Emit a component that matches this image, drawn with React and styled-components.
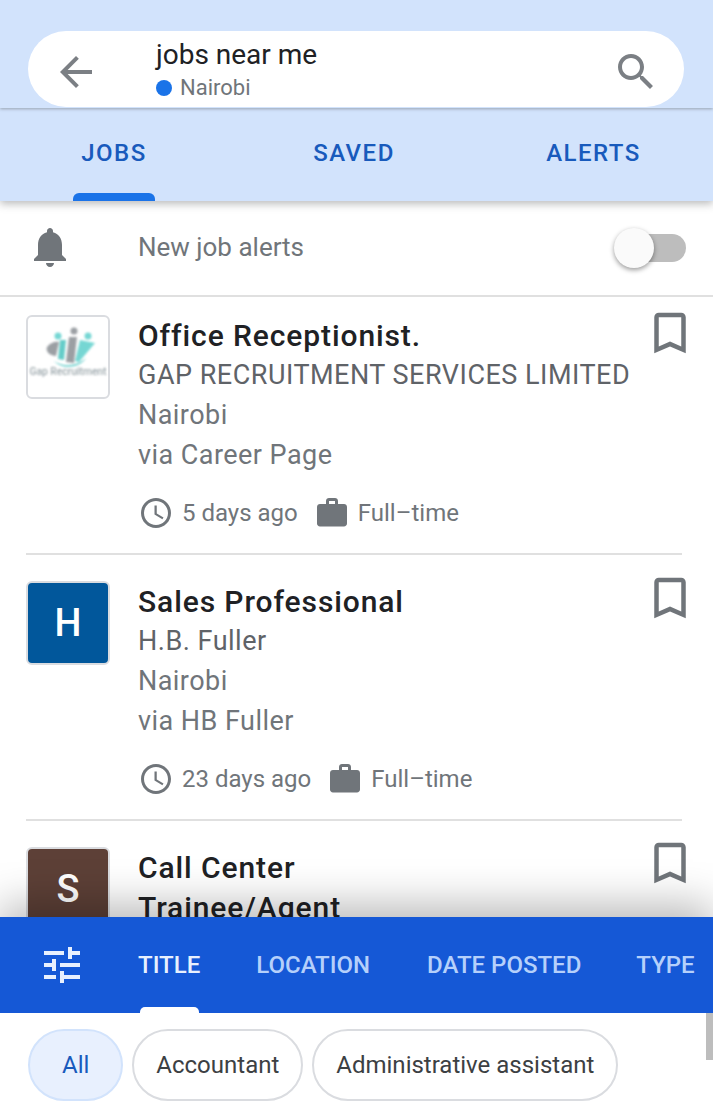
import styled, { createGlobalStyle } from 'styled-components'

const GlobalStyle = createGlobalStyle`
  html, body, #root {
    margin: 0;
    height: 100%;
  }
  body {
    font-family: Roboto, "Liberation Sans", sans-serif;
    background: #fff;
    overflow: hidden;
  }
`

const Page = styled.div`
  position: relative;
  height: 100vh;
  display: flex;
  flex-direction: column;
  overflow: hidden;
`

const Header = styled.header`
  flex: none;
  height: 201px;
  background: #d2e3fc;
  box-shadow: 0 3px 8px rgba(60, 64, 67, 0.35);
  position: relative;
  z-index: 2;
`

const SearchZone = styled.div`
  height: 108px;
  padding: 31px 29px 0 28px;
  box-sizing: border-box;
  box-shadow: 0 1px 3px rgba(60, 64, 67, 0.4);
`

const SearchPill = styled.div`
  height: 76px;
  background: #fff;
  border-radius: 38px;
  display: flex;
  align-items: center;
  padding: 0 24px 0 24px;
`

const Icon = styled.svg`
  flex: none;
  display: block;
  width: ${p => p.$size}px;
  height: ${p => p.$size}px;
  fill: ${p => p.$color || '#70757a'};
`

const PillIcon = styled.span`
  flex: none;
  margin-top: 5px;
  opacity: 0.92;
`

const QueryBlock = styled.div`
  flex: 1;
  margin-left: 56px;
  margin-top: 1px;
`

const Query = styled.div`
  font-size: 28px;
  line-height: 44px;
  margin-top: -6px;
  color: #202124;
`

const LocationLine = styled.div`
  display: flex;
  align-items: center;
  gap: 8px;
  font-size: 22px;
  line-height: 26px;
  margin-top: -2px;
  color: #70757a;
`

const Dot = styled.span`
  width: 16px;
  height: 16px;
  border-radius: 50%;
  background: #1a73e8;
`

const Tabs = styled.nav`
  height: 93px;
  display: grid;
  grid-template-columns: 228px 252px 227px;
`

const Tab = styled.div`
  position: relative;
  padding-top: 31px;
  text-align: center;
  font-size: 24px;
  line-height: 29px;
  font-weight: 500;
  letter-spacing: 1.5px;
  color: #185abc;
`

const TabMarker = styled.span`
  position: absolute;
  left: 73px;
  bottom: 0;
  width: 82px;
  height: 8px;
  border-radius: 6px 6px 0 0;
  background: #1a73e8;
`

const AlertRow = styled.div`
  flex: none;
  height: 94px;
  display: flex;
  align-items: center;
  padding: 0 27px 0 26px;
  border-bottom: 2px solid #e0e0e0;
`

const BellSlot = styled.span`
  flex: none;
  margin-top: -3px;
`

const AlertLabel = styled.div`
  flex: 1;
  margin-left: 64px;
  margin-top: -2px;
  font-size: 26px;
  color: #70757a;
`

const Toggle = styled.div`
  position: relative;
  width: 53px;
  height: 28px;
  border-radius: 14px;
  background: #bdbdbd;
`

const ToggleKnob = styled.span`
  position: absolute;
  left: -19px;
  top: -6px;
  width: 40px;
  height: 40px;
  border-radius: 50%;
  background: #fafafa;
  box-shadow: 0 2px 5px rgba(0, 0, 0, 0.4);
`

const JobList = styled.main`
  flex: 1;
  min-height: 0;
  overflow: hidden;
`

const JobCard = styled.article`
  display: flex;
  margin: 0 31px 0 26px;
  height: ${p => p.$height}px;
  padding-top: ${p => p.$top}px;
  box-sizing: border-box;
  border-bottom: 2px solid #e0e0e0;
`

const LogoBox = styled.div`
  flex: none;
  width: 84px;
  height: 84px;
  box-sizing: border-box;
  border-radius: 6px;
  border: 2px solid #dadce0;
  background: ${p => p.$bg || '#fff'};
  color: #fff;
  font-size: 38px;
  font-weight: 500;
  display: flex;
  align-items: center;
  justify-content: center;
`

const JobBody = styled.div`
  flex: 1;
  min-width: 0;
  margin-left: 28px;
`

const JobTitle = styled.h2`
  margin: 1px 0 -1px;
  width: 300px;
  font-size: 30px;
  line-height: 40px;
  font-weight: 500;
  letter-spacing: 0.9px;
  color: #202124;
  white-space: pre-line;
`

const Company = styled.div`
  font-size: 27px;
  line-height: 40px;
  letter-spacing: 0.5px;
  color: #5f6368;
  white-space: nowrap;
`

const MetaLine = styled.div`
  font-size: 27px;
  line-height: 40px;
  letter-spacing: 0.45px;
  color: #70757a;
`

const Facts = styled.div`
  display: flex;
  align-items: center;
  margin-top: 20px;
  font-size: 24px;
  color: #70757a;
`

const Fact = styled.span`
  display: flex;
  align-items: center;
  gap: 8px;
  margin-right: 16px;
`

const SaveSlot = styled.div`
  flex: none;
  width: 0;
  position: relative;
`

const SaveIcon = styled(Icon)`
  position: absolute;
  right: -15px;
  top: ${p => p.$top}px;
`

const BottomPanel = styled.section`
  flex: none;
  height: 195px;
  position: relative;
  z-index: 3;
  background: #fff;
  box-shadow: 0 -12px 40px rgba(0, 0, 0, 0.28);
`

const FilterBar = styled.div`
  height: 96px;
  background: #1558d6;
  display: flex;
  align-items: center;
  padding-left: 38px;
  white-space: nowrap;
  overflow: hidden;
`

const FilterTab = styled.div`
  position: relative;
  height: 96px;
  line-height: 96px;
  margin-left: ${p => p.$gap}px;
  font-size: 24px;
  font-weight: 500;
  color: ${p => (p.$active ? '#e8f0fe' : '#b5d0fb')};
`

const FilterMarker = styled.span`
  position: absolute;
  left: 2px;
  right: 1px;
  bottom: 0;
  height: 6px;
  border-radius: 5px 5px 0 0;
  background: #fff;
`

const Chips = styled.div`
  display: flex;
  gap: 9px;
  padding: 16px 0 0 28px;
`

const Chip = styled.div`
  height: 72px;
  box-sizing: border-box;
  padding: 0 ${p => (p.$active ? 32 : 22)}px;
  border-radius: 36px;
  display: flex;
  align-items: center;
  font-size: 24px;
  border: 2px solid ${p => (p.$active ? '#d2e3fc' : '#dadce0')};
  background: ${p => (p.$active ? '#e8f0fe' : '#fff')};
  color: ${p => (p.$active ? '#185abc' : '#3c4043')};
`

const ScrollThumb = styled.span`
  position: absolute;
  right: 0;
  top: 96px;
  width: 7px;
  height: 47px;
  background: #bdbdbd;
`

const paths = {
  back: 'M20 11H7.83l5.59-5.59L12 4l-8 8 8 8 1.41-1.41L7.83 13H20v-2z',
  search: 'M15.5 14h-.79l-.28-.27C15.41 12.59 16 11.11 16 9.5 16 5.91 13.09 3 9.5 3S3 5.91 3 9.5 5.91 16 9.5 16c1.61 0 3.09-.59 4.23-1.57l.27.28v.79l5 4.99L20.49 19l-4.99-5zm-6 0C7.01 14 5 11.99 5 9.5S7.01 5 9.5 5 14 7.01 14 9.5 11.99 14 9.5 14z',
  bell: 'M12 22c1.1 0 2-.9 2-2h-4c0 1.1.89 2 2 2zm6-6v-5c0-3.07-1.64-5.64-4.5-6.32V4c0-.83-.67-1.5-1.5-1.5s-1.5.67-1.5 1.5v.68C7.63 5.36 6 7.92 6 11v5l-2 2v1h16v-1l-2-2z',
  clock: 'M11.99 2C6.47 2 2 6.48 2 12s4.47 10 9.99 10C17.52 22 22 17.52 22 12S17.52 2 11.99 2zM12 20c-4.42 0-8-3.58-8-8s3.58-8 8-8 8 3.58 8 8-3.58 8-8 8zm.5-13H11v6l5.25 3.15.75-1.23-4.5-2.67z',
  work: 'M20 6h-4V4c0-1.11-.89-2-2-2h-4c-1.11 0-2 .89-2 2v2H4c-1.11 0-1.99.89-1.99 2L2 19c0 1.11.89 2 2 2h16c1.11 0 2-.89 2-2V8c0-1.11-.89-2-2-2zm-6 0h-4V4h4v2z',
  bookmark: 'M17 3H7c-1.1 0-1.99.9-1.99 2L5 21l7-3 7 3V5c0-1.1-.9-2-2-2zm0 15l-5-2.18L7 18V5h10v13z',
  tune: 'M3 17v2h6v-2H3zM3 5v2h10V5H3zm10 16v-2h8v-2h-8v-2h-2v6h2zM7 9v2H3v2h4v2h2V9H7zm14 4v-2H11v2h10zm-6-4h2V7h4V5h-4V3h-2v6z',
}

const Glyph = ({ name, size, color }) => (
  <Icon viewBox="0 0 24 24" $size={size} $color={color}>
    <path d={paths[name]} />
  </Icon>
)

// the blurry little company logo
const GapLogo = () => (
  <svg width="80" height="80" viewBox="0 0 80 80">
    <defs>
      <filter id="soft"><feGaussianBlur stdDeviation="0.8" /></filter>
    </defs>
    <g filter="url(#soft)" opacity="0.85">
      <circle cx="30" cy="19" r="3.5" fill="#5fd0cc" />
      <circle cx="46" cy="14" r="3.5" fill="#8a8f94" />
      <circle cx="60" cy="19" r="3.5" fill="#5fd0cc" />
      <path d="M19 30c3-4 8-6 12-5l-3 14c-5 0-11-4-9-9z" fill="#8a8f94" />
      <path d="M32 23l6 0 -2 20 -6-1z" fill="#4cc4c0" />
      <path d="M41 20l8 0 -3 26 -8-1z" fill="#8a8f94" />
      <path d="M52 23l15 3 -16 19 -4-1z" fill="#5fd0cc" />
      <path d="M26 44c8 6 22 6 32-3-6 10-24 12-32 3z" fill="#4cc4c0" />
      <text x="40" y="58" textAnchor="middle" fontFamily="Roboto, sans-serif" fontSize="11" textLength="77" lengthAdjust="spacingAndGlyphs" fill="#8a979d">Gap Recruitment</text>
    </g>
  </svg>
)

const jobs = [
  {
    title: 'Office Receptionist.',
    company: 'GAP RECRUITMENT SERVICES LIMITED',
    place: 'Nairobi',
    via: 'via Career Page',
    age: '5 days ago',
    height: 258,
    top: 18,
    saveTop: -9,
    logo: <LogoBox><GapLogo /></LogoBox>,
  },
  {
    title: 'Sales Professional',
    company: 'H.B. Fuller',
    place: 'Nairobi',
    via: 'via HB Fuller',
    age: '23 days ago',
    height: 266,
    top: 26,
    saveTop: -10,
    logo: <LogoBox $bg="#01579b">H</LogoBox>,
  },
  {
    title: 'Call Center\nTrainee/Agent',
    company: '',
    place: 'Nairobi',
    via: '',
    age: '',
    height: 300,
    top: 26,
    saveTop: -11,
    logo: <LogoBox $bg="#5d4037">S</LogoBox>,
  },
]

const filters = [
  { label: 'TITLE', gap: 52, active: true },
  { label: 'LOCATION', gap: 56 },
  { label: 'DATE POSTED', gap: 57 },
  { label: 'TYPE', gap: 55 },
]

function App() {
  return (
    <>
      <GlobalStyle />
      <Page>
        <Header>
          <SearchZone>
            <SearchPill>
              <PillIcon><Glyph name="back" size={48} /></PillIcon>
              <QueryBlock>
                <Query>jobs near me</Query>
                <LocationLine><Dot />Nairobi</LocationLine>
              </QueryBlock>
              <PillIcon><Glyph name="search" size={48} /></PillIcon>
            </SearchPill>
          </SearchZone>
          <Tabs>
            <Tab>JOBS<TabMarker /></Tab>
            <Tab>SAVED</Tab>
            <Tab>ALERTS</Tab>
          </Tabs>
        </Header>

        <AlertRow>
          <BellSlot><Glyph name="bell" size={48} /></BellSlot>
          <AlertLabel>New job alerts</AlertLabel>
          <Toggle><ToggleKnob /></Toggle>
        </AlertRow>

        <JobList>
          {jobs.map(job => (
            <JobCard key={job.title} $height={job.height} $top={job.top}>
              {job.logo}
              <JobBody>
                <JobTitle>{job.title}</JobTitle>
                {job.company && <Company>{job.company}</Company>}
                <MetaLine>{job.place}</MetaLine>
                {job.via && <MetaLine>{job.via}</MetaLine>}
                {job.age && (
                  <Facts>
                    <Fact><Glyph name="clock" size={36} />{job.age}</Fact>
                    <Fact><Glyph name="work" size={36} />Full–time</Fact>
                  </Facts>
                )}
              </JobBody>
              <SaveSlot>
                <SaveIcon viewBox="0 0 24 24" $size={54} $top={job.saveTop}>
                  <path d={paths.bookmark} />
                </SaveIcon>
              </SaveSlot>
            </JobCard>
          ))}
        </JobList>

        <BottomPanel>
          <FilterBar>
            <Glyph name="tune" size={48} color="#e8f0fe" />
            {filters.map(f => (
              <FilterTab key={f.label} $gap={f.gap} $active={f.active}>
                {f.label}
                {f.active && <FilterMarker />}
              </FilterTab>
            ))}
          </FilterBar>
          <Chips>
            <Chip $active>All</Chip>
            <Chip>Accountant</Chip>
            <Chip>Administrative assistant</Chip>
          </Chips>
          <ScrollThumb />
        </BottomPanel>
      </Page>
    </>
  )
}

export default App
